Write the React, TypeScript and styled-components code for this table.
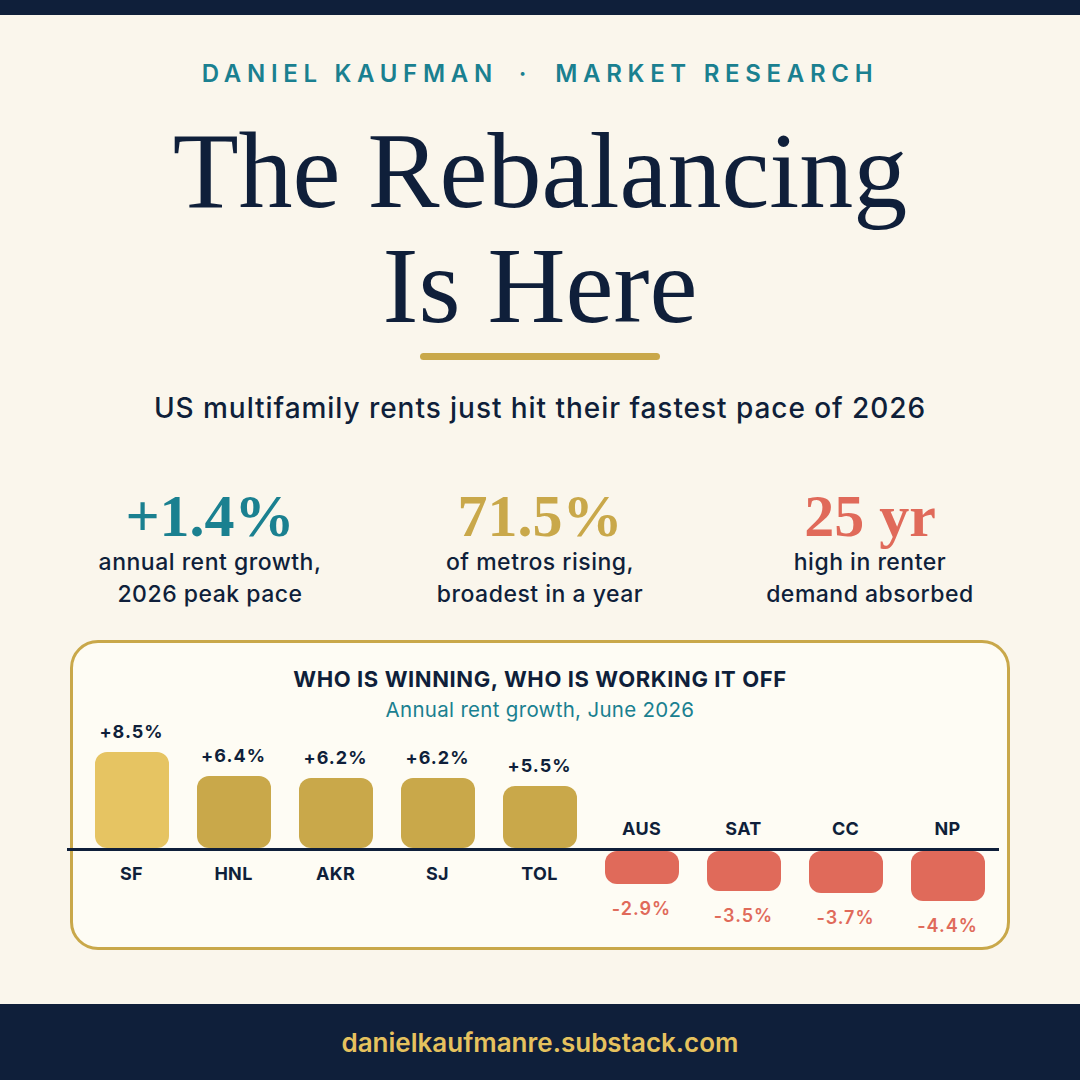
import * as React from 'react';
import styled, { createGlobalStyle } from 'styled-components';

const NAVY = '#0f1f3a';
const TEAL = '#1a8090';
const GOLD = '#c9a84a';
const GOLD_LIGHT = '#e6c462';
const RED = '#e06a5a';
const SCALE = 11.35; // px per percent

const GlobalStyle = createGlobalStyle`
  html, body {
    margin: 0;
    padding: 0;
    background: #faf6ec;
  }
  body {
    font-family: Inter, "Liberation Sans", sans-serif;
    color: ${NAVY};
  }
`;

const Page = styled.div`
  width: 1080px;
  height: 1080px;
  display: flex;
  flex-direction: column;
  align-items: center;
  background: #faf6ec;
  overflow: hidden;
`;

const TopBar = styled.div`
  align-self: stretch;
  flex-shrink: 0;
  height: 15px;
  background: ${NAVY};
`;

const Kicker = styled.div`
  margin-top: 46px;
  font-size: 24px;
  line-height: 26px;
  font-weight: 600;
  letter-spacing: 5.7px;
  color: ${TEAL};
  white-space: nowrap;
`;

const Dot = styled.span`
  margin: 0 23px 0 21px;
`;

const Title = styled.h1`
  margin: 26px 0 0;
  font-family: "Liberation Serif", "DejaVu Serif", serif;
  font-weight: 400;
  font-size: 108px;
  line-height: 115px;
  text-align: center;
  color: ${NAVY};
`;

const Rule = styled.div`
  margin-top: 10px;
  width: 240px;
  height: 7px;
  border-radius: 4px;
  background: ${GOLD};
`;

const Subtitle = styled.p`
  margin: 32px 0 0;
  font-size: 28px;
  line-height: 32px;
  font-weight: 500;
  letter-spacing: 0.95px;
  white-space: nowrap;
`;

const Stats = styled.div`
  margin-top: 63px;
  width: 990px;
  display: grid;
  grid-template-columns: repeat(3, 1fr);
`;

const Stat = styled.div`
  display: flex;
  flex-direction: column;
  align-items: center;
  text-align: center;
`;

const StatNumber = styled.div<{ $color: string }>`
  font-family: "Liberation Serif", "DejaVu Serif", serif;
  font-weight: 700;
  font-size: 60px;
  line-height: 59px;
  color: ${(p) => p.$color};
`;

const StatLabel = styled.div`
  font-size: 23px;
  line-height: 32px;
  font-weight: 500;
  letter-spacing: 0.5px;
`;

const Card = styled.section`
  box-sizing: border-box;
  margin-top: 30px;
  width: 940px;
  height: 310px;
  border: 3px solid ${GOLD};
  border-radius: 28px;
  background: #fefcf4;
  padding-top: 23px;
  display: flex;
  flex-direction: column;
`;

const CardTitle = styled.h2`
  margin: 0;
  text-align: center;
  font-size: 22px;
  line-height: 26px;
  font-weight: 700;
  letter-spacing: 0.6px;
  color: ${NAVY};
`;

const CardSub = styled.div`
  margin-top: 6px;
  text-align: center;
  font-size: 20.5px;
  line-height: 24px;
  letter-spacing: 0.3px;
  color: ${TEAL};
`;

const BarRow = styled.div<{ $side: 'up' | 'down' }>`
  display: grid;
  grid-template-columns: repeat(9, 102px);
  padding-left: 7.5px;
  height: ${(p) => (p.$side === 'up' ? '126px' : 'auto')};
  align-items: ${(p) => (p.$side === 'up' ? 'end' : 'start')};
`;

const Column = styled.div<{ $side: 'up' | 'down' }>`
  display: flex;
  flex-direction: column;
  align-items: center;
  justify-content: ${(p) => (p.$side === 'up' ? 'flex-end' : 'flex-start')};
`;

const Axis = styled.div`
  margin-left: -6px;
  width: 932px;
  height: 3px;
  background: ${NAVY};
`;

const Bar = styled.div<{ $color: string }>`
  width: 74px;
  border-radius: 12px;
  background: ${(p) => p.$color};
`;

const Value = styled.div<{ $negative?: boolean }>`
  font-size: 18px;
  line-height: 20px;
  font-weight: ${(p) => (p.$negative ? 600 : 700)};
  letter-spacing: 1px;
  color: ${(p) => (p.$negative ? RED : NAVY)};
  margin: ${(p) => (p.$negative ? '15px 0 0' : '0 0 10px')};
`;

const Name = styled.div<{ $above?: boolean }>`
  font-size: 18px;
  line-height: 20px;
  font-weight: 700;
  letter-spacing: 0.3px;
  color: ${NAVY};
  margin: ${(p) => (p.$above ? '0 0 9px' : '13px 0 0')};
`;

const Footer = styled.footer`
  margin-top: auto;
  align-self: stretch;
  height: 76px;
  background: ${NAVY};
  display: flex;
  align-items: center;
  justify-content: center;
  font-size: 26px;
  font-weight: 600;
  color: #e6c25e;
`;

type Metro = { code: string; value: number; highlight?: boolean };

const metros: Metro[] = [
  { code: 'SF', value: 8.5, highlight: true },
  { code: 'HNL', value: 6.4 },
  { code: 'AKR', value: 6.2 },
  { code: 'SJ', value: 6.2 },
  { code: 'TOL', value: 5.5 },
  { code: 'AUS', value: -2.9 },
  { code: 'SAT', value: -3.5 },
  { code: 'CC', value: -3.7 },
  { code: 'NP', value: -4.4 },
];

const fmt = (v: number) => (v > 0 ? `+${v.toFixed(1)}%` : `-${Math.abs(v).toFixed(1)}%`);

function App() {
  return (
    <Page>
      <GlobalStyle />
      <TopBar />
      <Kicker>
        DANIEL KAUFMAN<Dot>·</Dot>MARKET RESEARCH
      </Kicker>
      <Title>
        The Rebalancing
        <br />
        Is Here
      </Title>
      <Rule />
      <Subtitle>US multifamily rents just hit their fastest pace of 2026</Subtitle>

      <Stats>
        <Stat>
          <StatNumber $color={TEAL}>+1.4%</StatNumber>
          <StatLabel>
            annual rent growth,
            <br />
            2026 peak pace
          </StatLabel>
        </Stat>
        <Stat>
          <StatNumber $color={GOLD}>71.5%</StatNumber>
          <StatLabel>
            of metros rising,
            <br />
            broadest in a year
          </StatLabel>
        </Stat>
        <Stat>
          <StatNumber $color={RED}>25 yr</StatNumber>
          <StatLabel>
            high in renter
            <br />
            demand absorbed
          </StatLabel>
        </Stat>
      </Stats>

      <Card>
        <CardTitle>WHO IS WINNING, WHO IS WORKING IT OFF</CardTitle>
        <CardSub>Annual rent growth, June 2026</CardSub>
        <BarRow $side="up">
          {metros.map((m) =>
            m.value > 0 ? (
              <Column key={m.code} $side="up">
                <Value>{fmt(m.value)}</Value>
                <Bar
                  $color={m.highlight ? GOLD_LIGHT : GOLD}
                  style={{ height: m.value * SCALE }}
                />
              </Column>
            ) : (
              <Column key={m.code} $side="up">
                <Name $above>{m.code}</Name>
              </Column>
            )
          )}
        </BarRow>
        <Axis />
        <BarRow $side="down">
          {metros.map((m) =>
            m.value > 0 ? (
              <Column key={m.code} $side="down">
                <Name>{m.code}</Name>
              </Column>
            ) : (
              <Column key={m.code} $side="down">
                <Bar $color={RED} style={{ height: Math.abs(m.value) * SCALE }} />
                <Value $negative>{fmt(m.value)}</Value>
              </Column>
            )
          )}
        </BarRow>
      </Card>

      <Footer>danielkaufmanre.substack.com</Footer>
    </Page>
  );
}

export default App;
